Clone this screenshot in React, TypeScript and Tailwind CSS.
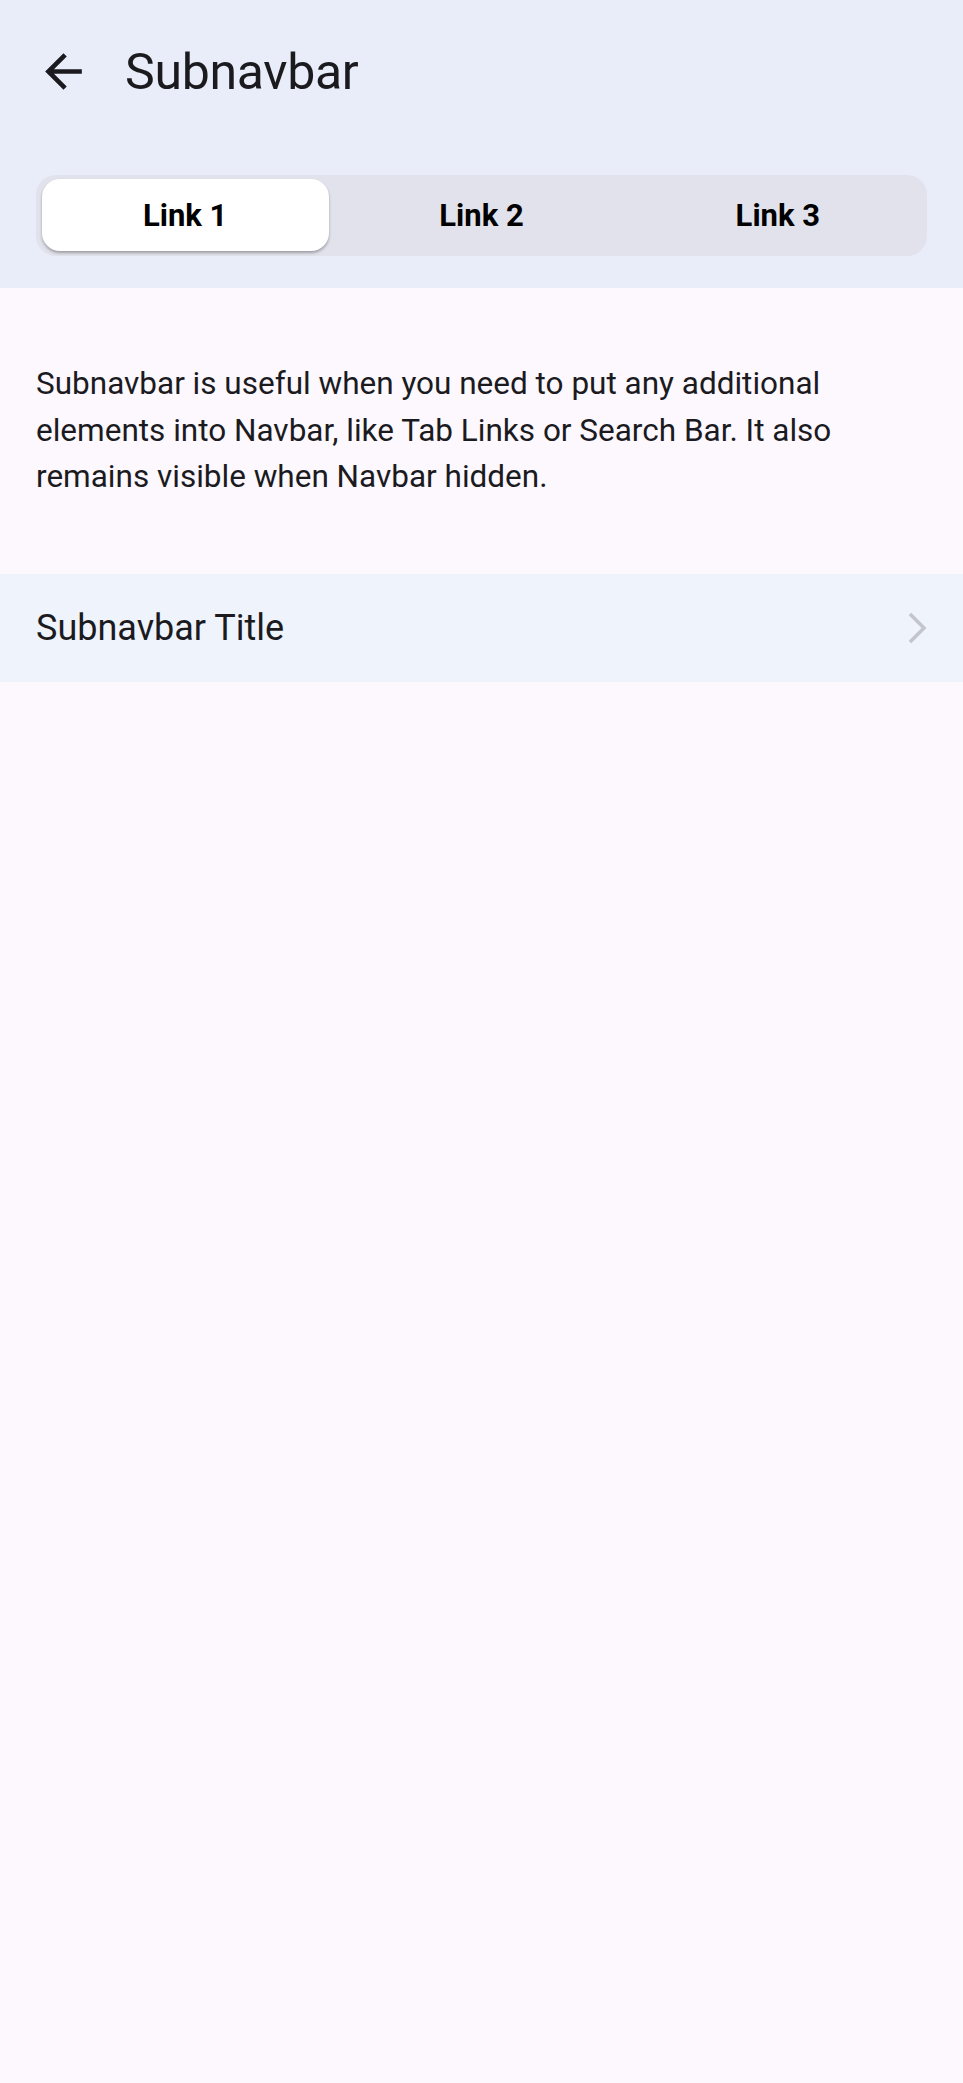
import React from "react";

export default function App() {
  const font = { fontFamily: "Roboto, 'Noto Sans', sans-serif" };
  return (
    <div className="min-h-[2083px] w-full bg-[#fcf8fe] text-[#1b1b1f]" style={font}>
      <div className="bg-[#e9edf9]">
        <div className="flex h-[143px] items-center">
          <div className="ml-[36px] flex h-[55px] w-[55px] items-center justify-center">
            <svg viewBox="0 0 24 24" className="h-[55px] w-[55px]" fill="#1b1b1f">
              <path d="M20 11H7.83l5.59-5.59L12 4l-8 8 8 8 1.41-1.41L7.83 13H20v-2z" />
            </svg>
          </div>
          <div className="ml-[34px] text-[50px] leading-none tracking-[-0.3px]">Subnavbar</div>
        </div>
        <div className="flex h-[145px] items-center px-[36px] pb-[1px]">
          <div className="flex h-[81px] w-full rounded-[20px] bg-[#e2e2ec] px-[1px]">
            {["Link 1", "Link 2", "Link 3"].map((l, i) => (
              <div key={l} className="flex w-0 flex-1 px-[4.5px] pt-[4px] pb-[5px]">
                <div
                  className={
                    i === 0
                      ? "flex flex-1 items-center justify-center rounded-[18px] bg-white pt-[4px] text-[31px] font-bold text-black shadow-[0_2px_3px_rgba(0,0,0,0.3)]"
                      : "flex flex-1 items-center justify-center pt-[4px] text-[31px] font-bold text-black"
                  }
                >
                  {l}
                </div>
              </div>
            ))}
          </div>
        </div>
      </div>
      <p className="px-[36px] pt-[73px] text-[31.5px] leading-[46.5px]">
        Subnavbar is useful when you need to put any additional elements into Navbar, like Tab Links or Search Bar. It also remains visible when Navbar hidden.
      </p>
      <div className="mt-[73px] flex h-[108px] items-center justify-between bg-[#eff3fc] pl-[36px] pr-[35px]">
        <span className="text-[36px]">Subnavbar Title</span>
        <svg viewBox="0 0 20 32" className="h-[32px] w-[20px]" fill="none" stroke="#c4c4cc" strokeWidth="3.5">
          <polyline points="2,2 16,16 2,30" />
        </svg>
      </div>
    </div>
  );
}
